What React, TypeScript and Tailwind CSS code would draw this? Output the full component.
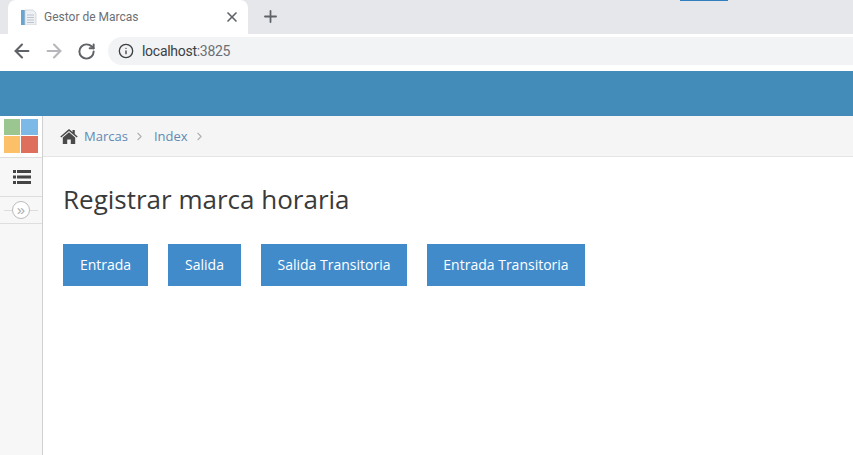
import { ArrowLeft, ArrowRight, ChevronRight, Info, Plus, RotateCw, X } from "lucide-react";

const buttons = [
  { label: "Entrada", width: "w-[85px]" },
  { label: "Salida", width: "w-[73px]" },
  { label: "Salida Transitoria", width: "w-[146px]" },
  { label: "Entrada Transitoria", width: "w-[158px]" },
];

function TabIcon() {
  return (
    <svg width="16" height="16" viewBox="0 0 16 16" className="shrink-0">
      <rect x="0" y="1" width="4" height="15" fill="#6aa5d2" />
      <path d="M4 1h8l3 3v12H4z" fill="#eef1f4" stroke="#c5ccd3" strokeWidth="0.7" />
      <path d="M6 6h7M6 8.5h7M6 11h7M6 13.5h7" stroke="#bcc4cc" strokeWidth="1" />
    </svg>
  );
}

function HomeIcon() {
  return (
    <svg width="18" height="15" viewBox="0 0 18 15" className="shrink-0">
      <path d="M9 0 0.3 7.4l1 1.1L9 2l7.7 6.5 1-1.1-2.9-2.5V1h-2.3v2z" fill="#4a4a4a" />
      <path d="M9 3.2 2.8 8.4V15h4.4v-4.4h3.6V15h4.4V8.4z" fill="#4a4a4a" />
    </svg>
  );
}

function ListIcon() {
  return (
    <svg width="18" height="14" viewBox="0 0 18 14">
      <path d="M0 0h3v3H0zM4 0h14v3H4zM0 5.5h3v3H0zM4 5.5h14v3H4zM0 11h3v3H0zM4 11h14v3H4z" fill="#444" />
    </svg>
  );
}

export default function App() {
  return (
    <div className="h-[455px] w-[853px] overflow-hidden bg-white font-['Open_Sans',sans-serif]">
      {/* browser chrome */}
      <div className="relative flex h-[34px] items-end bg-[#e6e7eb] pl-2">
        <div className="absolute right-[125px] top-0 h-px w-12 bg-[#2f7ec0]" />
        <div className="flex h-[34px] w-[240px] items-center rounded-t-lg bg-white pl-[13px] pr-2">
          <TabIcon />
          <span className="ml-[7px] flex-1 font-['Roboto',sans-serif] text-xs text-[#6b6f74]">Gestor de Marcas</span>
          <X size={16} strokeWidth={2.5} className="text-[#5f6368]" />
        </div>
        <Plus size={19} strokeWidth={2.25} className="mb-2 ml-[13px] text-[#5f6368]" />
      </div>
      <div className="flex h-[37px] items-center bg-white pb-[3px]">
        <ArrowLeft size={22} strokeWidth={2.25} className="ml-[11px] text-[#5f6368]" />
        <ArrowRight size={22} strokeWidth={2.25} className="ml-[10px] text-[#b5b7ba]" />
        <RotateCw size={19} strokeWidth={2.5} className="ml-3 text-[#5f6368]" />
        <div className="ml-3 flex h-7 flex-1 items-center rounded-l-full bg-[#f1f3f4] pl-[10px]">
          <Info size={16} strokeWidth={2} className="text-[#3c4043]" />
          <span className="ml-2 font-['Roboto',sans-serif] text-sm tracking-[-0.28px] text-[#3c4043]">
            localhost<span className="text-[#6b6f74]">:3825</span>
          </span>
        </div>
      </div>
      {/* app */}
      <div className="h-[45px] bg-[#438cb9]" />
      <div className="flex h-[339px]">
        <aside className="flex w-[43px] shrink-0 flex-col border-r border-[#d0d0d0] bg-[#f7f7f7]">
          <div className="grid h-[41px] grid-cols-[16px_17px] grid-rows-[16px_17px] content-start justify-center gap-px bg-white pt-[3px]">
            <div className="bg-[#9bc690]" />
            <div className="bg-[#7db9e6]" />
            <div className="bg-[#fcc068]" />
            <div className="bg-[#dd6f5c]" />
          </div>
          <div className="flex h-10 items-center justify-center border-y border-[#dedede] pl-px">
            <ListIcon />
          </div>
          <div className="relative flex h-[27px] items-center justify-center border-b border-[#dedede]">
            <div className="absolute inset-x-1 top-[13px] h-px bg-[#dcdcdc]" />
            <div className="relative flex size-[18px] items-center justify-center rounded-full border border-[#bbb] bg-white pb-[2px] font-['Liberation_Sans',sans-serif] text-[15px] leading-none text-[#aaa]">
              »
            </div>
          </div>
        </aside>
        <main className="flex-1">
          <div className="flex h-[41px] items-center border-b border-[#e5e5e5] bg-[#f5f5f5] pl-[17px] pt-px text-[13px] text-[#6389b3]">
            <HomeIcon />
            <span className="ml-[6px]">Marcas</span>
            <ChevronRight size={13} className="ml-[5px] text-[#b0b0b0]" />
            <span className="ml-2">Index</span>
            <ChevronRight size={13} className="ml-[5px] text-[#b0b0b0]" />
          </div>
          <div className="pl-5 pt-6">
            <h1 className="text-[26px] leading-[36px] text-[#3a3a3a]">Registrar marca horaria</h1>
            <div className="mt-[27px] flex gap-5">
              {buttons.map((button) => (
                <button
                  key={button.label}
                  className={`${button.width} h-[42px] bg-[#428bca] text-sm text-white`}
                >
                  {button.label}
                </button>
              ))}
            </div>
          </div>
        </main>
      </div>
    </div>
  );
}
